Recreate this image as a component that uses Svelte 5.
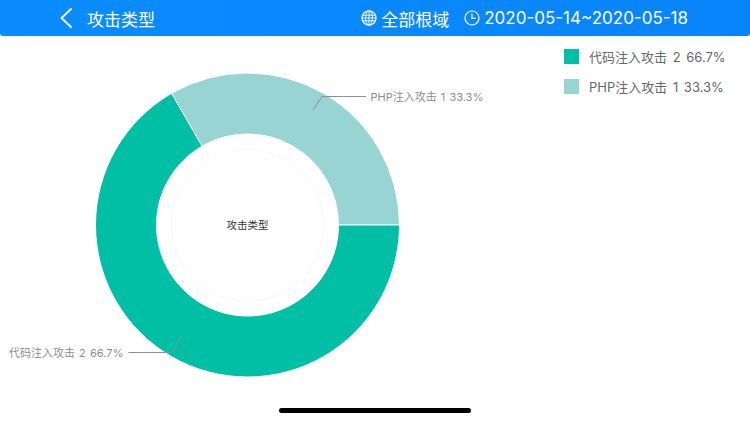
<script lang="ts">
    const cx = 247.5;
    const cy = 189;
    const outer = 152;
    const inner = 91;

    let slices = [
        { name: "代码注入攻击", value: 2, pct: "66.7%", color: "#00bfa5" },
        { name: "PHP注入攻击", value: 1, pct: "33.3%", color: "#98d4d4" },
    ];

    function pt(r: number, deg: number) {
        let a = (deg * Math.PI) / 180;
        return (cx + r * Math.cos(a)).toFixed(2) + " " + (cy - r * Math.sin(a)).toFixed(2);
    }

    // angles run counterclockwise from 3 o'clock, like the chart
    function arc(from: number, to: number) {
        let large = to - from > 180 ? 1 : 0;
        return `M${pt(outer, from)} A${outer} ${outer} 0 ${large} 0 ${pt(outer, to)} L${pt(inner, to)} A${inner} ${inner} 0 ${large} 1 ${pt(inner, from)} Z`;
    }
</script>

<div class="page">
    <header class="topbar">
        <div class="title">
            <svg class="back" width="14" height="22" viewBox="0 0 14 22">
                <path d="M12.5 1.5 L2.5 11 L12.5 20.5" fill="none" stroke="#fff" stroke-width="1.8" />
            </svg>
            <span>攻击类型</span>
        </div>
        <div class="filters">
            <span class="filter">
                <svg width="16" height="16" viewBox="0 0 16 16" fill="none" stroke="#fff" stroke-width="0.9">
                    <circle cx="8" cy="8" r="7" stroke-width="1.3" />
                    <ellipse cx="8" cy="8" rx="3.4" ry="7" />
                    <path d="M8 1V15M1.5 5.2H14.5M1 8H15M1.5 10.8H14.5" />
                </svg>
                <span>全部根域</span>
            </span>
            <span class="filter">
                <svg width="16" height="16" viewBox="0 0 16 16" fill="none" stroke="#fff" stroke-width="1.2">
                    <circle cx="8" cy="8" r="7" />
                    <path d="M8 3.4V8.4H12" />
                </svg>
                <span>2020-05-14~2020-05-18</span>
            </span>
        </div>
    </header>

    <main class="content">
        <svg class="chart" width="540" height="360" viewBox="0 0 540 360">
            <path d={arc(0, 120)} fill={slices[1].color} stroke="#fff" stroke-width="1" />
            <path d={arc(120, 360)} fill={slices[0].color} stroke="#fff" stroke-width="1" />
            <circle cx={cx} cy={cy} r="76" fill="none" stroke="#f6f9f9" stroke-width="1" />
            <text class="center" x={cx} y={cy + 4} text-anchor="middle">攻击类型</text>

            <path class="leader" d="M313 74 L322 60.5 H366" />
            <text class="label" x="370.5" y="65">{slices[1].name} {slices[1].value} {slices[1].pct}</text>

            <path class="leader" d="M182 300 L171.5 316.5 H128.5" />
            <text class="label" x="9" y="321">{slices[0].name} {slices[0].value} {slices[0].pct}</text>
        </svg>

        <ul class="legend">
            {#each slices as s}
                <li>
                    <i class="swatch" style="background: {s.color}"></i>
                    <span>{s.name} {s.value} {s.pct}</span>
                </li>
            {/each}
        </ul>
    </main>

    <div class="home-bar"></div>
</div>

<style>
    :global(body) {
        margin: 0;
        background: #fff;
    }

    .page {
        width: 750px;
        height: 422px;
        overflow: hidden;
        display: flex;
        flex-direction: column;
        align-items: center;
        font-family: "Noto Sans CJK SC", "Liberation Sans", sans-serif;
    }

    .topbar {
        width: 100%;
        height: 36px;
        flex: none;
        display: flex;
        align-items: center;
        justify-content: space-between;
        box-sizing: border-box;
        padding: 0 62px 0 59px;
        background: linear-gradient(90deg, #0a8cff, #0884fb);
        border-radius: 0 0 3px 3px;
        color: #fff;
        font-size: 17px;
        font-weight: 400;
    }

    .title {
        display: flex;
        align-items: center;
        gap: 14px;
    }

    .filters {
        display: flex;
        align-items: center;
        gap: 15px;
    }

    .filter {
        display: flex;
        align-items: center;
        gap: 4px;
        font-family: "Inter", "Noto Sans CJK SC", sans-serif;
    }

    .content {
        width: 100%;
        flex: 1;
        min-height: 0;
        display: flex;
    }

    .chart {
        flex: none;
    }

    .center {
        font-size: 10.5px;
        fill: #333;
    }

    .label {
        font-size: 11px;
        fill: #8c8c8c;
        word-spacing: 1px;
        font-family: "Inter", "Noto Sans CJK SC", sans-serif;
    }

    .leader {
        fill: none;
        stroke: #8f8f8f;
        stroke-width: 1;
    }

    .legend {
        list-style: none;
        margin: 0;
        padding: 12px 0 0 24px;
        display: flex;
        flex-direction: column;
        gap: 14.5px;
        color: #666;
        font-size: 13px;
        word-spacing: 2px;
        font-family: "Inter", "Noto Sans CJK SC", sans-serif;
    }

    .legend li {
        display: flex;
        align-items: center;
        gap: 10px;
        height: 16px;
        white-space: nowrap;
    }

    .swatch {
        width: 15px;
        height: 15px;
    }

    .home-bar {
        flex: none;
        width: 192px;
        height: 5px;
        margin-bottom: 9px;
        border-radius: 3px;
        background: #000;
    }
</style>
